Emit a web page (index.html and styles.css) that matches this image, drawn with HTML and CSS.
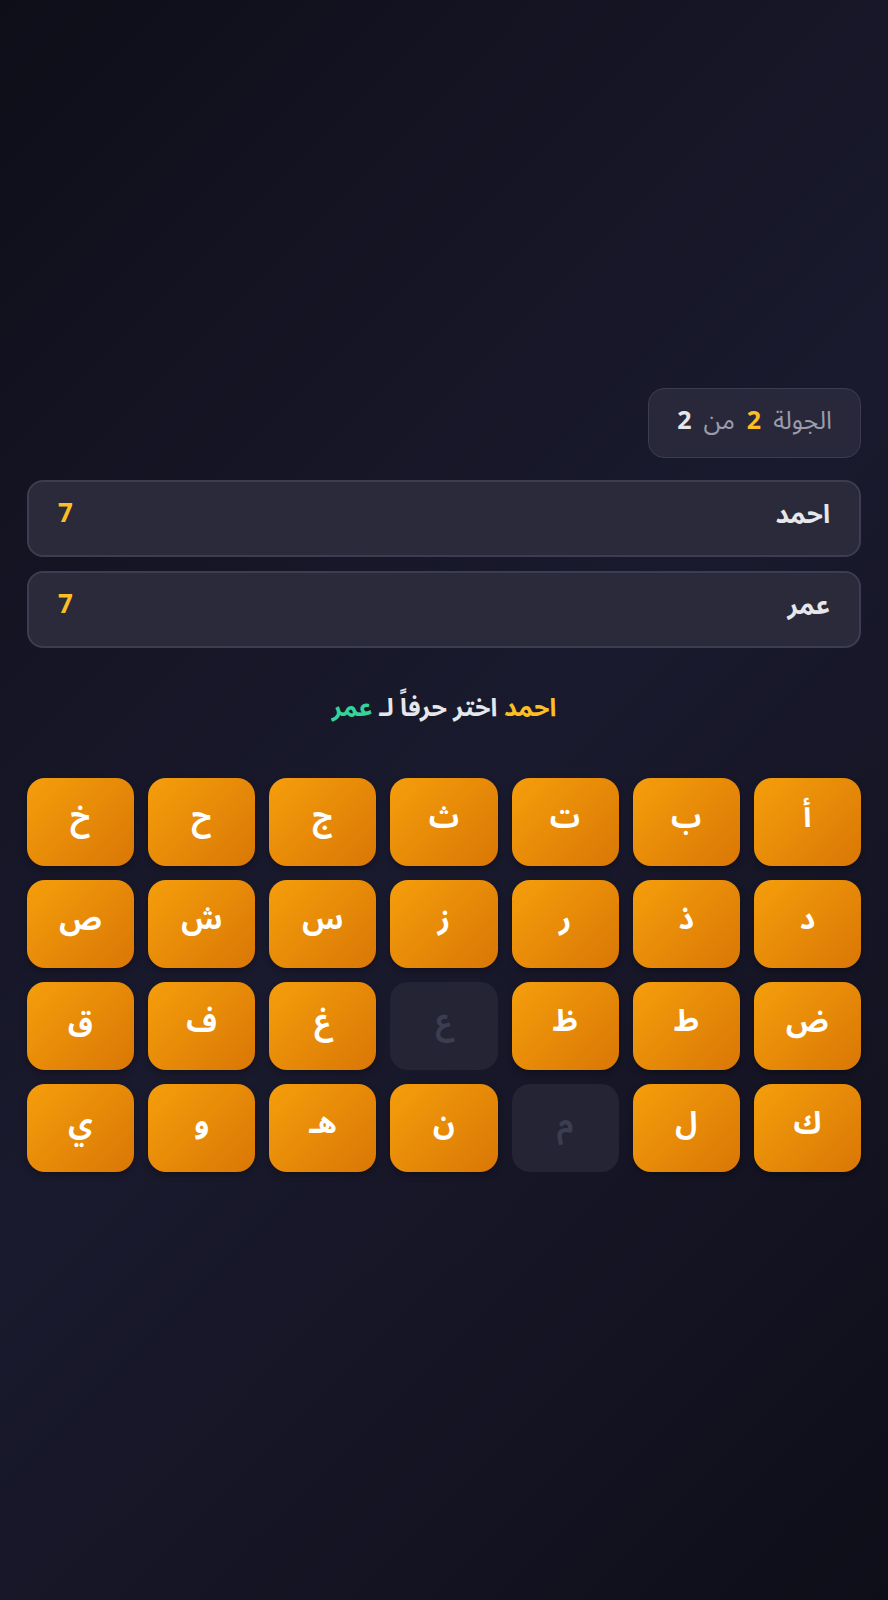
FILE: index.html
```html
<!DOCTYPE html>
<html lang="ar" dir="rtl">
<head>
<meta charset="utf-8">
<title>لعبة الحروف</title>
<link rel="stylesheet" href="styles.css">
</head>
<body>
<main class="page">
  <div class="round-row">
    <div class="round"><span>الجولة</span> <span class="cur">2</span> <span>من</span> <span class="total">2</span></div>
  </div>
  <div class="players">
    <div class="player"><span class="name">احمد</span><span class="score">7</span></div>
    <div class="player"><span class="name">عمر</span><span class="score">7</span></div>
  </div>
  <p class="prompt"><span class="p1">احمد</span> اختر حرفاً لـ <span class="p2">عمر</span></p>
  <div class="grid">
    <button class="key">أ</button>
    <button class="key">ب</button>
    <button class="key">ت</button>
    <button class="key">ث</button>
    <button class="key">ج</button>
    <button class="key">ح</button>
    <button class="key">خ</button>
    <button class="key">د</button>
    <button class="key">ذ</button>
    <button class="key">ر</button>
    <button class="key">ز</button>
    <button class="key">س</button>
    <button class="key">ش</button>
    <button class="key">ص</button>
    <button class="key">ض</button>
    <button class="key">ط</button>
    <button class="key">ظ</button>
    <button class="key used">ع</button>
    <button class="key">غ</button>
    <button class="key">ف</button>
    <button class="key">ق</button>
    <button class="key">ك</button>
    <button class="key">ل</button>
    <button class="key used">م</button>
    <button class="key">ن</button>
    <button class="key">هـ</button>
    <button class="key">و</button>
    <button class="key">ي</button>
  </div>
</main>
</body>
</html>
```

FILE: styles.css
```css
html, body {
  margin: 0;
  padding: 0;
}
body {
  background: linear-gradient(135deg, #0e0e19 0%, #1a1a2e 50%, #0e0e19 100%);
  font-family: "Noto Sans Arabic", "Noto Sans", "DejaVu Sans", sans-serif;
  color: #e5e7eb;
}
.page {
  box-sizing: border-box;
  min-height: 100vh;
  padding: 0 27px 40px;
  display: flex;
  flex-direction: column;
  justify-content: center;
}
.round-row {
  display: flex;
  justify-content: flex-start;
}
.round {
  box-sizing: border-box;
  height: 70px;
  padding: 0 28px 4px;
  display: flex;
  align-items: center;
  gap: 12px;
  border: 1.5px solid #3c3c50;
  border-radius: 16px;
  background: rgba(42, 42, 60, 0.9);
  color: #9a9cab;
  font-size: 25px;
}
.round .cur {
  color: #fbbf24;
  font-weight: 700;
}
.round .total {
  color: #e5e7eb;
  font-weight: 700;
}
.players {
  margin-top: 22px;
  display: flex;
  flex-direction: column;
  gap: 14px;
}
.player {
  box-sizing: border-box;
  height: 77px;
  padding: 0 29px;
  display: flex;
  align-items: center;
  justify-content: space-between;
  background: #2a2a3b;
  border: 2px solid #3d3d51;
  border-radius: 16px;
}
.name {
  font-size: 26px;
  font-weight: 700;
  color: #e5e7eb;
  margin-top: -8px;
}
.score {
  font-size: 26px;
  font-weight: 700;
  color: #fbbf24;
  margin-top: -10px;
}
.prompt {
  margin: 40px 0 50px;
  line-height: 40px;
  text-align: center;
  font-size: 25px;
  font-weight: 700;
  color: #e5e7eb;
}
.p1 { color: #fbbf24; }
.p2 { color: #34d399; }
.grid {
  display: grid;
  grid-template-columns: repeat(7, 1fr);
  gap: 14px;
}
.key {
  height: 88px;
  border: none;
  border-radius: 18px;
  background: linear-gradient(135deg, #f59e0b 0%, #d97706 100%);
  box-shadow: 0 3px 6px rgba(0, 0, 0, 0.3);
  color: #ffffff;
  font-family: inherit;
  font-size: 30px;
  font-weight: 700;
  padding: 0 0 10px;
  cursor: pointer;
}
.key.used {
  background: #242435;
  box-shadow: none;
  color: #3c3d50;
  cursor: default;
}
```
